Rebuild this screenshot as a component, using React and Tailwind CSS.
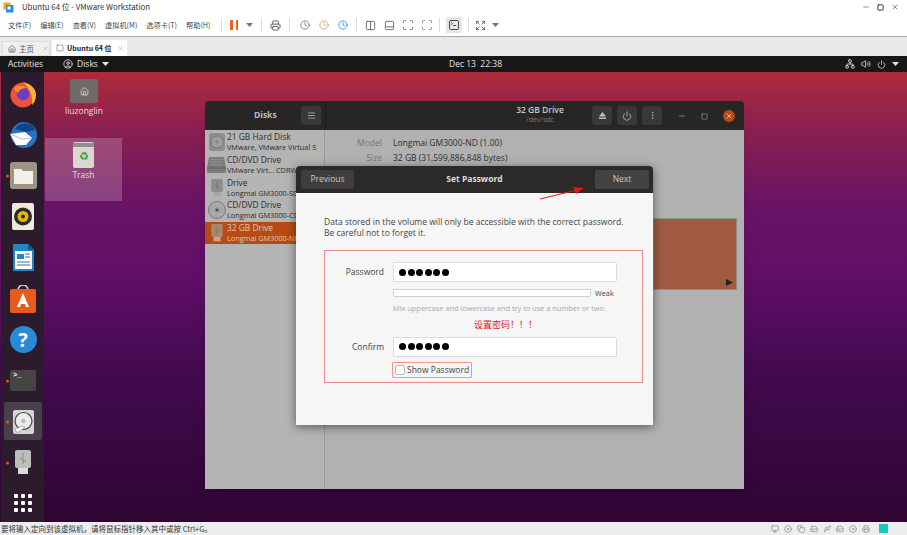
import React from 'react';
import {
  House, X, Minus, Square, Clock, Network, Volume2, Power, Menu, EllipsisVertical, Columns2, PanelBottom, Scan, SquareTerminal, Expand, Printer, CircleUser, Monitor, HardDrive, Disc, Usb, Copy,
} from 'lucide-react';

const ubuntu = { fontFamily: '"Open Sans", "Noto Sans", sans-serif' };
const cjk = { fontFamily: '"Noto Sans CJK SC", "Liberation Sans", sans-serif' };

const menus = ['文件(F)', '编辑(E)', '查看(V)', '虚拟机(M)', '选项卡(T)', '帮助(H)'];

const Caret = ({ className }) => (
  <svg width="7" height="4" viewBox="0 0 7 4" className={className}>
    <path d="M0 0h7L3.5 4z" fill="currentColor" />
  </svg>
);

const TitleBar = () => (
  <div className="h-[14px] bg-white flex items-center pl-[3px] pr-[8px]">
    <svg width="11" height="11" viewBox="0 0 11 11">
      <rect x="0.5" y="0.5" width="7" height="7" fill="#f5a623" />
      <rect x="3" y="3" width="7.5" height="7.5" fill="#2a8fd8" />
      <rect x="4.5" y="4.5" width="3" height="3" fill="#fff" />
    </svg>
    <span className="ml-[8px] text-[7.8px] text-[#333] whitespace-nowrap" style={cjk}>Ubuntu 64 位 - VMware Workstation</span>
    <div className="ml-auto flex items-center gap-[7px] text-[#555]">
      <Minus size={8} />
      <Square size={7} strokeWidth={3} className="text-[#222]" />
      <X size={8} />
    </div>
  </div>
);

const MenuBar = () => (
  <div className="h-[23px] bg-white border-b border-[#a8a8a8] flex items-center pl-[8px] text-[#444]">
    <div className="flex gap-[9px] text-[7.2px] w-[206px] whitespace-nowrap" style={cjk}>
      {menus.map((m) => <span key={m}>{m}</span>)}
    </div>
    <div className="w-px h-[14px] bg-[#ddd] ml-[7px]" />
    <div className="flex gap-[3px] ml-[8px]">
      <span className="w-[2.5px] h-[10px] bg-[#e8622c]" />
      <span className="w-[2.5px] h-[10px] bg-[#e8622c]" />
    </div>
    <Caret className="ml-[8px] text-[#777]" />
    <div className="w-px h-[14px] bg-[#ddd] mx-[8px]" />
    <Printer size={11} className="text-[#555]" />
    <div className="w-px h-[14px] bg-[#ddd] mx-[8px]" />
    <Clock size={10} className="text-[#777] ml-[2px]" />
    <Clock size={10} className="text-[#d9a066] ml-[9px]" />
    <Clock size={10} className="text-[#2a8fd8] ml-[9px]" />
    <div className="w-px h-[14px] bg-[#ddd] mx-[8px]" />
    <Columns2 size={11} className="text-[#666]" />
    <PanelBottom size={11} className="text-[#666] ml-[8px]" />
    <Scan size={12} className="text-[#666] ml-[7px]" />
    <Scan size={12} className="text-[#888] ml-[7px]" />
    <div className="w-px h-[14px] bg-[#ddd] mx-[6px]" />
    <div className="w-[16px] h-[16px] bg-[#e6e6e6] flex items-center justify-center">
      <SquareTerminal size={12} className="text-[#444]" />
    </div>
    <div className="w-px h-[14px] bg-[#ddd] mx-[6px]" />
    <Expand size={11} className="text-[#666]" />
    <Caret className="ml-[6px] text-[#777]" />
  </div>
);

const TabBar = () => (
  <div className="h-[19px] bg-[#e9e9e9] flex items-end pl-[2px] gap-[2px]" style={cjk}>
    <div className="w-[48px] h-[15px] bg-[#efefef] border border-[#ddd] flex items-center pl-[5px] text-[7.5px] text-[#555] gap-[3px] whitespace-nowrap">
      <House size={8} className="shrink-0" />
      <span>主页</span>
      <X size={7} className="ml-[5px] text-[#aaa] shrink-0" />
    </div>
    <div className="w-[75px] h-[16px] bg-white flex items-center pl-[4px] text-[7px] font-bold text-[#222]">
      <Square size={8} className="text-[#4a9a5a] mr-[3px] shrink-0" />
      <span className="whitespace-nowrap">Ubuntu 64 位</span>
      <X size={7} className="ml-[5px] text-[#aaa] shrink-0" />
    </div>
  </div>
);

const TopPanel = () => (
  <div className="h-[16px] bg-[#171717] relative flex items-center text-[#e4e4e4] text-[8.5px] pl-[8px] pr-[8px]" style={ubuntu}>
    <span>Activities</span>
    <CircleUser size={10} className="ml-[20px]" />
    <span className="ml-[4px]">Disks</span>
    <Caret className="ml-[4px]" />
    <span className="absolute left-[449px] whitespace-nowrap">Dec 13&nbsp;&nbsp;22:38</span>
    <div className="ml-auto flex items-center gap-[6px]">
      <Network size={10} />
      <Volume2 size={10} />
      <Power size={9} />
      <Caret />
    </div>
  </div>
);

const Firefox = () => (
  <svg width="28" height="28" viewBox="0 0 28 28">
    <circle cx="14" cy="15" r="12.5" fill="#f0503c" />
    <path d="M14 2c8 2 13 7 13 13 0 5-2 8-4 10 1-7-1-15-9-23z" fill="#f9b233" />
    <circle cx="14" cy="14" r="6.5" fill="#6d3fc0" />
    <path d="M5 8c3-3 9-3 13 0-3 0-8 1-9 5-2-1-3-3-4-5z" fill="#ff8a2a" />
  </svg>
);

const Thunderbird = () => (
  <svg width="28" height="28" viewBox="0 0 28 28">
    <circle cx="15" cy="14" r="13" fill="#2a72c4" />
    <path d="M6 8c3-5 9-7 15-5 2 1 4 3 5 6l-9 2z" fill="#0f4488" />
    <path d="M1 13l15-2 7 6-6 7H7z" fill="#fff" />
    <path d="M1 13l12 5 10-1" stroke="#b9c2cc" fill="none" />
  </svg>
);

const Files = () => (
  <svg width="27" height="27" viewBox="0 0 27 27">
    <rect width="27" height="27" rx="3" fill="#9c9484" />
    <path d="M4 7h7l2 2h10v13H4z" fill="#f2efe9" />
  </svg>
);

const Rhythmbox = () => (
  <svg width="23" height="27" viewBox="0 0 23 27">
    <rect width="22" height="27" rx="2" fill="#efe9dc" />
    <circle cx="11" cy="13.5" r="9" fill="#2b2b2b" />
    <circle cx="11" cy="13.5" r="5.5" fill="#e6b800" />
    <circle cx="11" cy="13.5" r="2" fill="#2b2b2b" />
  </svg>
);

const Writer = () => (
  <svg width="23" height="27" viewBox="0 0 23 27">
    <path d="M1 0h15l6 6v21H1z" fill="#1e88c7" />
    <rect x="3" y="7" width="17" height="18" fill="#fff" />
    <rect x="5" y="10" width="7" height="5" fill="#1e88c7" />
    <path d="M13 10h5M13 13h5M5 18h13M5 21h13" stroke="#4b6f86" />
    <path d="M16 0l6 6h-6z" fill="#155d88" />
  </svg>
);

const Software = () => (
  <svg width="26" height="28" viewBox="0 0 26 28">
    <path d="M8 5a5 5 0 0 1 10 0" fill="none" stroke="#ddd" strokeWidth="1.5" />
    <rect y="4" width="26" height="24" rx="2" fill="#e95a20" />
    <path d="M13 8l6 14h-3l-1-3h-4l-1 3H7z" fill="#fff" />
  </svg>
);

const Help = () => (
  <div className="w-[27px] h-[27px] rounded-full bg-[#2a8ad6] text-white text-[20px] font-bold flex items-center justify-center" style={ubuntu}>?</div>
);

const Terminal = () => (
  <div className="w-[26px] h-[21px] bg-[#454545] rounded-[2px] text-white text-[7px] pl-[3px] leading-[10px] font-bold" style={{ fontFamily: '"Liberation Mono", monospace' }}>&gt;_</div>
);

const DockDisk = () => (
  <svg width="21" height="24" viewBox="0 0 21 24">
    <rect width="21" height="24" rx="2" fill="#d5d5d5" />
    <circle cx="10.5" cy="11" r="8.5" fill="#ececec" stroke="#444" strokeWidth="1.2" />
    <circle cx="10.5" cy="11" r="2.2" fill="#bbb" />
    <path d="M2 19l7-3 3 1-6 5H3z" fill="#fafafa" stroke="#777" strokeWidth="0.5" />
  </svg>
);

const SideHdd = () => (
  <svg width="16" height="18" viewBox="0 0 16 18">
    <rect width="16" height="18" rx="3" fill="#8d8d8d" />
    <circle cx="8" cy="9" r="6" fill="#9f9f9f" stroke="#7a7a7a" />
    <circle cx="8" cy="9" r="1.5" fill="#848484" />
  </svg>
);

const SideOptical = () => (
  <svg width="19" height="18" viewBox="0 0 19 18">
    <path d="M2 1h15l2 11v4a1 1 0 0 1-1 1H1a1 1 0 0 1-1-1v-4z" fill="#7c7c7c" />
    <path d="M0 12h19" stroke="#5f5f5f" />
    <path d="M3 3.5h13M3 6h13M3 8.5h13" stroke="#8f8f8f" />
  </svg>
);

const SideDisc = () => (
  <svg width="18" height="18" viewBox="0 0 18 18">
    <circle cx="9" cy="9" r="8.5" fill="#a9a9a9" stroke="#777" />
    <circle cx="9" cy="9" r="2.5" fill="#8a8a8a" />
    <circle cx="9" cy="9" r="1" fill="#333" />
  </svg>
);

const UsbIcon = ({ w = 16, h = 25, body = '#bdbdbd', line = '#8a8a8a', tip = '#dcdcdc' }) => (
  <svg width={w} height={h} viewBox="0 0 16 25">
    <rect width="16" height="18" rx="2" fill={body} />
    <path d="M8 3v11M8 10l-3-2M8 12l3-2" stroke={line} fill="none" />
    <rect x="3" y="18" width="10" height="6" fill={tip} />
  </svg>
);

const DockItem = ({ running, active, children }) => (
  <div className="relative w-[38px] h-[41px] flex items-center justify-center shrink-0">
    {active && <span className="absolute inset-x-0 top-[1px] h-[38px] bg-[#4a3f4d] rounded-[2px]" />}
    {running && <span className="absolute left-[2px] top-1/2 -translate-y-1/2 w-[3px] h-[3px] rounded-full bg-[#e9541f]" />}
    <div className="relative flex">{children}</div>
  </div>
);

const Dock = () => (
  <div className="w-[43px] ml-px bg-[#2b1b2c] flex flex-col items-center pl-[1px] pt-px">
    <DockItem><Firefox /></DockItem>
    <DockItem><Thunderbird /></DockItem>
    <DockItem running><Files /></DockItem>
    <DockItem><Rhythmbox /></DockItem>
    <DockItem><Writer /></DockItem>
    <DockItem><Software /></DockItem>
    <DockItem><Help /></DockItem>
    <DockItem running><Terminal /></DockItem>
    <DockItem running active><DockDisk /></DockItem>
    <DockItem running><UsbIcon /></DockItem>
    <div className="grid grid-cols-3 gap-[3px] mt-[11px]">
      {[...Array(9)].map((_, i) => <span key={i} className="w-[4px] h-[4px] bg-white rounded-[1px]" />)}
    </div>
  </div>
);

const driveRows = [
  ['21 GB Hard Disk', 'VMware, VMware Virtual S', <SideHdd key="a" />],
  ['CD/DVD Drive', 'VMware Virt... CDRW', <SideOptical key="b" />],
  ['Drive', 'Longmai GM3000-SD', <UsbIcon key="c" w={12} h={18} body="#8d8d8d" line="#707070" tip="#a5a5a5" />],
  ['CD/DVD Drive', 'Longmai GM3000-CD', <SideDisc key="d" />],
  ['32 GB Drive', 'Longmai GM3000-ND', <UsbIcon key="e" w={12} h={18} body="#a8866f" line="#8a6a55" tip="#c7a58f" />],
];

const DriveSidebar = () => (
  <div className="w-[120px] bg-[#b4b4b4] border-r border-[#9a9a9a] overflow-hidden pt-px shrink-0">
    {driveRows.map(([name, sub, icon], i) => (
      <div key={i} className={`h-[22.7px] flex items-center pl-[2px] ${i === 4 ? 'bg-[#b84a14] text-[#e0c8b8]' : 'text-[#2c2c2c]'}`}>
        <div className="w-[19px] flex justify-center shrink-0">{icon}</div>
        <div className="ml-px leading-[10px] whitespace-nowrap" style={ubuntu}>
          <div className="text-[8.4px]">{name}</div>
          <div className="text-[7.3px]">{sub}</div>
        </div>
      </div>
    ))}
  </div>
);

const HeaderBtn = ({ children }) => (
  <div className="w-[20px] h-[19px] bg-[#3a3836] rounded-[3px] flex items-center justify-center text-[#bbb]">{children}</div>
);

const DisksWindow = () => (
  <div className="absolute left-[205px] top-[29px] w-[539px] h-[388px] flex flex-col rounded-t-[4px] overflow-hidden shadow-lg" style={ubuntu}>
    <div className="h-[29px] bg-[#282624] flex items-center text-[#c8c8c8] shrink-0">
      <div className="w-[120px] relative flex items-center h-full">
        <span className="ml-[49px] text-[8.5px] font-bold text-[#bcbcbc]">Disks</span>
        <div className="absolute left-[96px]"><HeaderBtn><Menu size={9} /></HeaderBtn></div>
      </div>
      <div className="w-px h-full bg-[#1a1a1a]" />
      <div className="flex-1 relative h-full">
        <div className="absolute left-[184px] top-[4px] w-[60px] text-center leading-[10px]">
          <div className="text-[8.5px] font-semibold whitespace-nowrap">32 GB Drive</div>
          <div className="text-[7px] text-[#777]">/dev/sdc</div>
        </div>
        <div className="absolute left-[266px] top-[5px] flex gap-[5px]">
          <HeaderBtn><svg width="7" height="7" viewBox="0 0 7 7"><path d="M3.5 0L7 4.5H0zM0 5.5h7V7H0z" fill="currentColor" /></svg></HeaderBtn>
          <HeaderBtn><Power size={10} /></HeaderBtn>
          <HeaderBtn><EllipsisVertical size={9} /></HeaderBtn>
        </div>
        <div className="absolute left-[352px] top-[9px] flex items-center gap-[15px] text-[#aaa]">
          <Minus size={8} />
          <Square size={7} />
          <div className="w-[12px] h-[12px] rounded-full bg-[#b84a14] flex items-center justify-center text-[#eee]"><X size={8} /></div>
        </div>
      </div>
    </div>
    <div className="flex flex-1 min-h-0 bg-[#b1b1b1]">
      <DriveSidebar />
      <div className="flex-1 relative text-[8.5px] text-[#2f2f2f]">
        <div className="grid grid-cols-[57px_1fr] gap-x-[11px] gap-y-[4px] pt-[7px] leading-[11px]">
          <span className="text-right text-[#767676]">Model</span><span>Longmai GM3000-ND (1.00)</span>
          <span className="text-right text-[#767676]">Size</span><span>32 GB (31,599,886,848 bytes)</span>
        </div>
        <div className="absolute left-[328px] top-[88px] w-[84px] h-[72px] bg-[#a05a42] flex items-end justify-end p-[3px] border border-[#8f8f8f]">
          <svg width="7" height="7" viewBox="0 0 7 7"><path d="M0 0l7 3.5L0 7z" fill="#222" /></svg>
        </div>
      </div>
    </div>
  </div>
);

const Dots = () => (
  <div className="flex gap-[1.5px] ml-[5px]">
    {[...Array(6)].map((_, i) => <span key={i} className="w-[7px] h-[7px] rounded-full bg-black" />)}
  </div>
);

const PwField = () => (
  <div className="w-[224px] h-[20px] bg-white border border-[#dcdcdc] rounded-[2px] flex items-center"><Dots /></div>
);

const PasswordDialog = () => (
  <div className="absolute left-[296px] top-[94px] w-[357px] h-[259px] flex flex-col rounded-t-[4px] overflow-hidden shadow-[0_2px_10px_rgba(0,0,0,0.5)]" style={ubuntu}>
    <div className="h-[27px] bg-[#2c2a28] flex items-center justify-between pl-[5px] pr-[4px] shrink-0 relative">
      <div className="w-[53px] h-[19px] bg-[#403e3c] rounded-[2px] flex items-center justify-center text-[8.5px] text-[#c8c8c8]">Previous</div>
      <span className="text-[8.5px] font-bold text-[#dedede]">Set Password</span>
      <div className="w-[54px] h-[19px] bg-[#454341] rounded-[2px] flex items-center justify-center text-[8.5px] text-[#c8c8c8]">Next</div>
      <svg width="46" height="14" viewBox="0 0 46 14" className="absolute left-[244px] top-[20px]">
        <path d="M0 13L37 4" stroke="#e01818" strokeWidth="1" />
        <path d="M44 2L33 1l3 7z" fill="#e01818" />
      </svg>
    </div>
    <div className="flex-1 bg-[#f6f6f6] pl-[28px] pt-[24px]">
      <p className="text-[8.53px] leading-[10.5px] text-[#444] whitespace-nowrap">
        Data stored in the volume will only be accessible with the correct password.<br />Be careful not to forget it.
      </p>
      <div className="mt-[12px] w-[319px] h-[133px] border border-[#ef8a8a] pt-[11px] text-[8.5px] text-[#444]">
        <div className="flex items-center">
          <span className="w-[59px] text-right">Password</span>
          <div className="ml-[9px]"><PwField /></div>
        </div>
        <div className="flex items-center ml-[68px] mt-[6px]">
          <div className="w-[198px] h-[8px] border border-[#d0d0d0] rounded-[1px] bg-white" />
          <span className="ml-[4px] text-[7.3px]">Weak</span>
        </div>
        <div className="ml-[68px] mt-[4px] text-[7.4px] leading-[10px] text-[#a8a8a8] whitespace-nowrap">Mix uppercase and lowercase and try to use a number or two.</div>
        <div className="ml-[149px] mt-[6px] text-[9px] leading-[11px] text-[#e01818] whitespace-nowrap" style={cjk}>设置密码！！！</div>
        <div className="flex items-center mt-[7px]">
          <span className="w-[59px] text-right">Confirm</span>
          <div className="ml-[9px]"><PwField /></div>
        </div>
        <div className="ml-[67px] mt-[5px] w-[80px] h-[16px] border border-[#ef9a80] rounded-[1px] flex items-center pl-[2px]">
          <span className="w-[10px] h-[10px] border border-[#bbb] bg-white rounded-[2px]" />
          <span className="ml-[2px] whitespace-nowrap">Show Password</span>
        </div>
      </div>
    </div>
  </div>
);

const DesktopIcons = () => (
  <>
    <div className="absolute left-[69px] top-[7px] w-[30px] flex flex-col items-center" style={ubuntu}>
      <div className="w-[28px] h-[24px] bg-[#6f6a68] rounded-[2px] flex items-center justify-center text-[#ddd]"><House size={9} /></div>
      <span className="text-[8.5px] text-[#eadfe0] whitespace-nowrap mt-[2px]">liuzonglin</span>
    </div>
    <div className="absolute left-[45px] top-[66px] w-[77px] h-[63px] bg-white/20 flex flex-col items-center pt-[4px]" style={ubuntu}>
      <div className="w-[21px] h-[26px] bg-[#d8d8d0] rounded-[2px] flex flex-col items-center">
        <span className="w-full h-[4px] bg-[#8e8e8e] mt-[1px]" />
        <span className="text-[#2f9a3c] text-[11px] leading-[18px]">♻</span>
      </div>
      <span className="text-[8.5px] text-[#e8dce2] mt-[1px]">Trash</span>
    </div>
  </>
);

const StatusBar = () => (
  <div className="h-[13px] bg-[#ededed] flex items-center pl-[1px] pr-[6px] text-[7.5px] text-[#333]" style={cjk}>
    <span className="whitespace-nowrap">要将输入定向到该虚拟机，请将鼠标指针移入其中或按 Ctrl+G。</span>
    <div className="ml-auto flex items-center gap-[5px] text-[#888]">
      <Monitor size={8} />
      <Disc size={8} />
      <Copy size={8} />
      <HardDrive size={8} />
      <Usb size={8} />
      <HardDrive size={8} />
      <Disc size={8} />
      <Printer size={8} />
      <span className="w-[9px] h-[9px] bg-[#1fc8b8] ml-[4px]" />
      <span className="w-[8px]" />
    </div>
  </div>
);

export default function App() {
  return (
    <div className="w-[907px] h-[535px] flex flex-col overflow-hidden bg-white">
      <TitleBar />
      <MenuBar />
      <TabBar />
      <TopPanel />
      <div className="flex-1 relative flex bg-[linear-gradient(180deg,#ad2b3b_0%,#8a2050_13%,#6a1465_29%,#5f0f66_46%,#430a50_66%,#2e0532_100%)]">
        <Dock />
        <DesktopIcons />
        <DisksWindow />
        <PasswordDialog />
      </div>
      <StatusBar />
    </div>
  );
}
